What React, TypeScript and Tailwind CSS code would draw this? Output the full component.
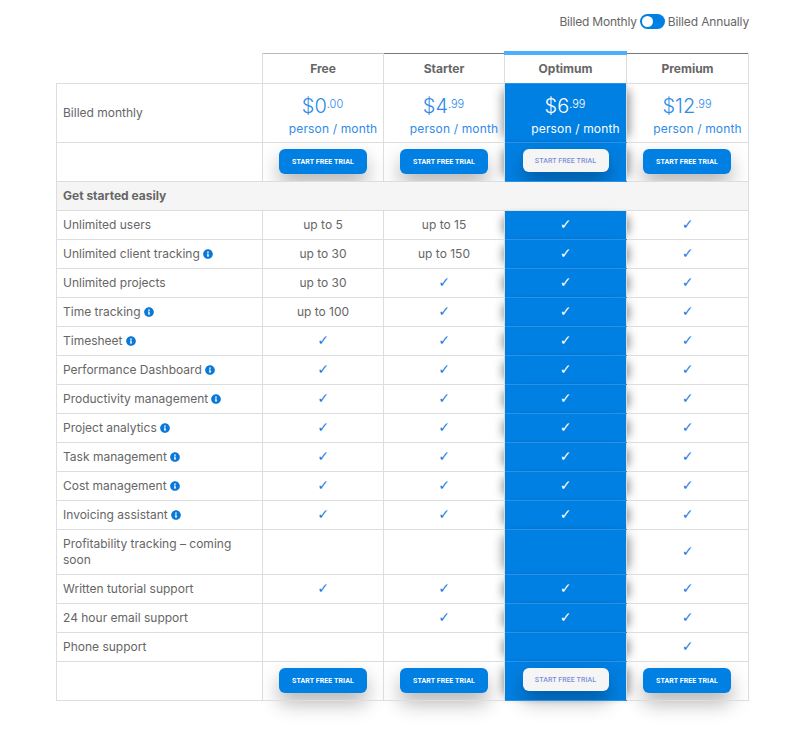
import { FaInfoCircle } from 'react-icons/fa';

type Cell = string | boolean;

interface Feature {
  name: string;
  info?: boolean;
  tall?: boolean;
  values: [Cell, Cell, Cell, Cell];
}

const features: Feature[] = [
  { name: 'Unlimited users', values: ['up to 5', 'up to 15', true, true] },
  { name: 'Unlimited client tracking', info: true, values: ['up to 30', 'up to 150', true, true] },
  { name: 'Unlimited projects', values: ['up to 30', true, true, true] },
  { name: 'Time tracking', info: true, values: ['up to 100', true, true, true] },
  { name: 'Timesheet', info: true, values: [true, true, true, true] },
  { name: 'Performance Dashboard', info: true, values: [true, true, true, true] },
  { name: 'Productivity management', info: true, values: [true, true, true, true] },
  { name: 'Project analytics', info: true, values: [true, true, true, true] },
  { name: 'Task management', info: true, values: [true, true, true, true] },
  { name: 'Cost management', info: true, values: [true, true, true, true] },
  { name: 'Invoicing assistant', info: true, values: [true, true, true, true] },
  { name: 'Profitability tracking – coming soon', tall: true, values: [false, false, false, true] },
  { name: 'Written tutorial support', values: [true, true, true, true] },
  { name: '24 hour email support', values: [false, true, true, true] },
  { name: 'Phone support', values: [false, false, false, true] },
];

const plans = [
  { name: 'Free', price: '$0', cents: '.00' },
  { name: 'Starter', price: '$4', cents: '.99' },
  { name: 'Optimum', price: '$6', cents: '.99', featured: true },
  { name: 'Premium', price: '$12', cents: '.99' },
];

const cellBorder = 'border border-[#dddddd]';
const featuredCell =
  'border border-[#2a92e6] border-r-[#dddddd] bg-[#0080e3] text-white shadow-[-8px_0_10px_-6px_rgba(0,0,0,0.45),8px_0_10px_-6px_rgba(0,0,0,0.45)]';

function TrialButton({ featured }: { featured?: boolean }) {
  if (featured) {
    return (
      <button className="mx-auto mb-[4px] block h-[23px] w-[86px] rounded-[6px] bg-[#f5f5f5] pt-[2px] font-['Roboto',sans-serif] text-[7px] font-medium tracking-[0.1px] text-[#7c8fdc] shadow-[0_10px_20px_rgba(0,0,0,0.3)]">
        START FREE TRIAL
      </button>
    );
  }
  return (
    <button className="mx-auto mb-[2px] block h-[25px] w-[88px] rounded-[6px] bg-[#0080e3] pt-[2px] font-['Roboto',sans-serif] text-[7px] font-bold tracking-[0.1px] text-white shadow-[0_10px_20px_rgba(0,0,0,0.3)]">
      START FREE TRIAL
    </button>
  );
}

function ButtonRow() {
  return (
    <tr className="h-[39px]">
      <td className={cellBorder} />
      {plans.map((plan) => (
        <td
          key={plan.name}
          className={`${plan.featured ? featuredCell : cellBorder} ${plan.name === 'Premium' ? 'pr-px' : ''} align-middle`}
        >
          <TrialButton featured={plan.featured} />
        </td>
      ))}
    </tr>
  );
}

export default function App() {
  return (
    <div className="min-h-[732px] bg-white pl-[56px] pr-[43px] font-['Inter',sans-serif] text-[12px] text-[#666666]">
      <div className="flex h-[53px] items-start justify-end pt-[14px] leading-[16px] tracking-[-0.2px]">
        <span>Billed Monthly</span>
        <span className="mx-[3px] flex h-[15px] w-[25px] items-center rounded-full bg-[#0080e3] pl-[2px]">
          <span className="h-[11px] w-[11px] rounded-full bg-white" />
        </span>
        <span className="tracking-[-0.13px]">Billed Annually</span>
      </div>

      <table className="w-[693px] table-fixed border-collapse">
        <colgroup>
          <col className="w-[206px]" />
          <col className="w-[121px]" />
          <col className="w-[121px]" />
          <col className="w-[122px]" />
          <col className="w-[122px]" />
        </colgroup>
        <thead>
          <tr className="h-[30px]">
            <th className="border-b border-r border-[#dddddd]" />
            {plans.map((plan) =>
              plan.featured ? (
                <th
                  key={plan.name}
                  className="relative bg-white pt-[2px] text-[12px] font-bold text-[#666666] shadow-[0_0_10px_rgba(0,0,0,0.4)]"
                >
                  <span className="absolute -top-[3px] -left-px -right-px h-[4px] bg-[#4db0ff]" />
                  {plan.name}
                </th>
              ) : (
                <th
                  key={plan.name}
                  className={`${cellBorder} ${plan.name === 'Free' ? 'border-t-[#bbbbbb]' : 'border-t-[#777777]'} text-[12px] font-bold text-[#666666]`}
                >
                  {plan.name}
                </th>
              ),
            )}
          </tr>
        </thead>
        <tbody>
          <tr className="h-[59px]">
            <td className={`${cellBorder} px-[6px]`}>Billed monthly</td>
            {plans.map((plan) => (
              <td
                key={plan.name}
                className={`${plan.featured ? featuredCell : `${cellBorder} text-[#2f8ae8]`} pt-[9px] text-center align-top`}
              >
                <div className="h-[26px] pr-[1px] leading-[26px]">
                  <span className="text-[20px] font-light">{plan.price}</span>
                  <sup className="text-[11px] font-light">{plan.cents}</sup>
                </div>
                <div className="mt-px pl-[20px] leading-[18px] tracking-[0.15px]">person / month</div>
              </td>
            ))}
          </tr>
          <ButtonRow />
          <tr className="h-[29px] bg-[#f5f5f5]">
            <td colSpan={5} className={`${cellBorder} px-[6px] font-bold`}>
              Get started easily
            </td>
          </tr>
          {features.map((feature) => (
            <tr key={feature.name} className={feature.tall ? 'h-[45px]' : 'h-[29px]'}>
              <td className={`${cellBorder} px-[6px] leading-[16px]`}>
                {feature.name}
                {feature.info && <FaInfoCircle className="ml-[3px] inline-block size-[10px] align-[-1px] text-[#0a78d8]" />}
              </td>
              {feature.values.map((value, i) => (
                <td key={i} className={`${plans[i].featured ? featuredCell : cellBorder} text-center align-middle`}>
                  {value === true ? (
                    <span
                      className={`font-['DejaVu_Sans',sans-serif] text-[14px] font-bold leading-[16px] ${plans[i].featured ? 'text-white' : 'text-[#2a7de1]'}`}
                    >
                      ✓
                    </span>
                  ) : (
                    value || null
                  )}
                </td>
              ))}
            </tr>
          ))}
          <ButtonRow />
        </tbody>
      </table>
    </div>
  );
}
